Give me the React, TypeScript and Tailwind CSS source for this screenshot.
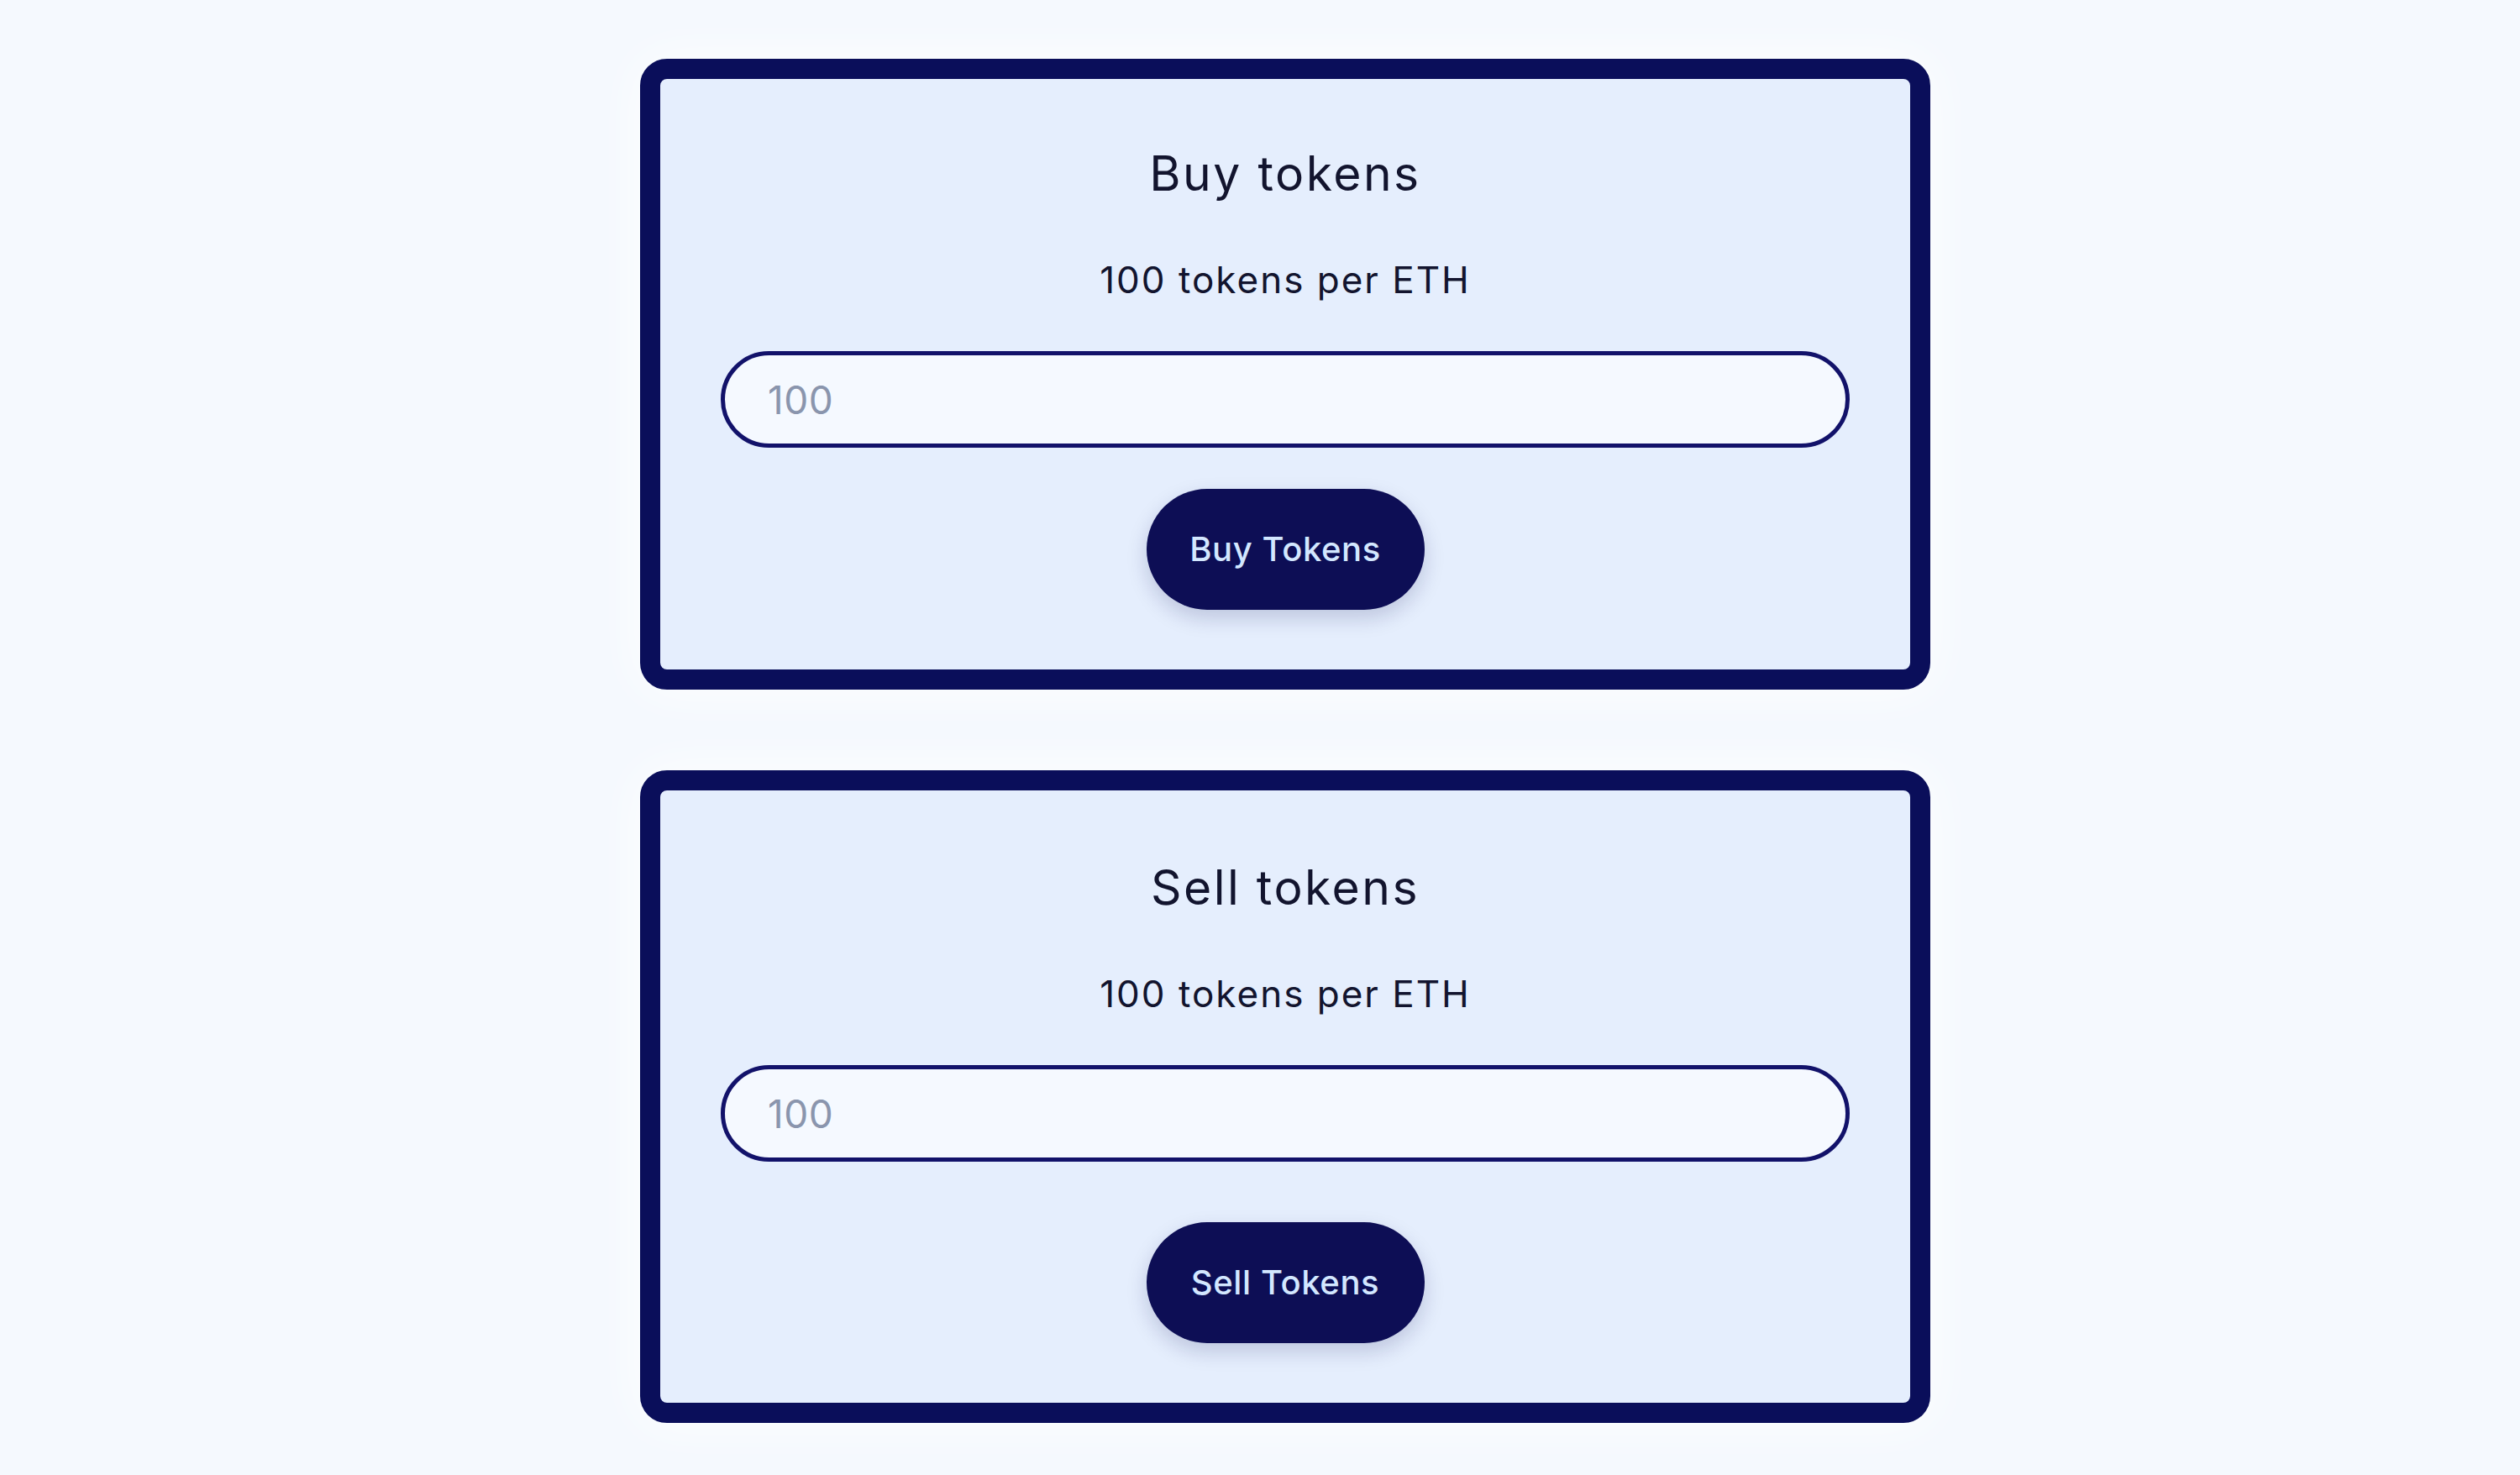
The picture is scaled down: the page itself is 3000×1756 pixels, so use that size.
import React from "react";

interface TradeCardProps {
  title: string;
  action: string;
  topPad: string;
  buttonGap: string;
}

function TradeCard({ title, action, topPad, buttonGap }: TradeCardProps) {
  return (
    <div
      className={
        "w-[1536px] rounded-[32px] border-[24px] border-[#0a0e5a] bg-[#e5eefd] shadow-[0_0_60px_rgba(255,255,255,0.9)] flex flex-col items-center px-[72px] pb-[71px] " +
        topPad
      }
    >
      <h2 className="text-[57px] leading-[68px] font-normal text-[#12142e] tracking-[2.5px]">{title}</h2>
      <p className="mt-[64px] text-[44px] leading-[56px] text-[#12142e] tracking-[2px]">100 tokens per ETH</p>
      <input
        type="number"
        placeholder="100"
        className="mt-[57px] w-full h-[115px] rounded-full border-[5px] border-[#12126a] bg-[#f5f9ff] pl-[51px] text-[46px] tracking-[0.5px] text-[#12142e] placeholder:text-[#8a95ad] outline-none"
      />
      <button
        className={
          "w-[331px] h-[144px] rounded-full bg-[#0d0e55] text-[40px] font-medium tracking-[0.6px] text-[#d3e7ff] shadow-[0_10px_24px_rgba(13,14,85,0.18)] " +
          buttonGap
        }
      >
        {action}
      </button>
    </div>
  );
}

export default function App() {
  return (
    <div
      className="min-h-[1756px] w-full bg-[#f5f9fe] flex flex-col items-center gap-[96px] pt-[70px] pb-[60px] pl-[60px]"
      style={{ fontFamily: "Inter, 'Noto Sans', sans-serif" }}
    >
      <TradeCard title="Buy tokens" action="Buy Tokens" topPad="pt-[79px]" buttonGap="mt-[49px]" />
      <TradeCard title="Sell tokens" action="Sell Tokens" topPad="pt-[82px]" buttonGap="mt-[72px]" />
    </div>
  );
}
